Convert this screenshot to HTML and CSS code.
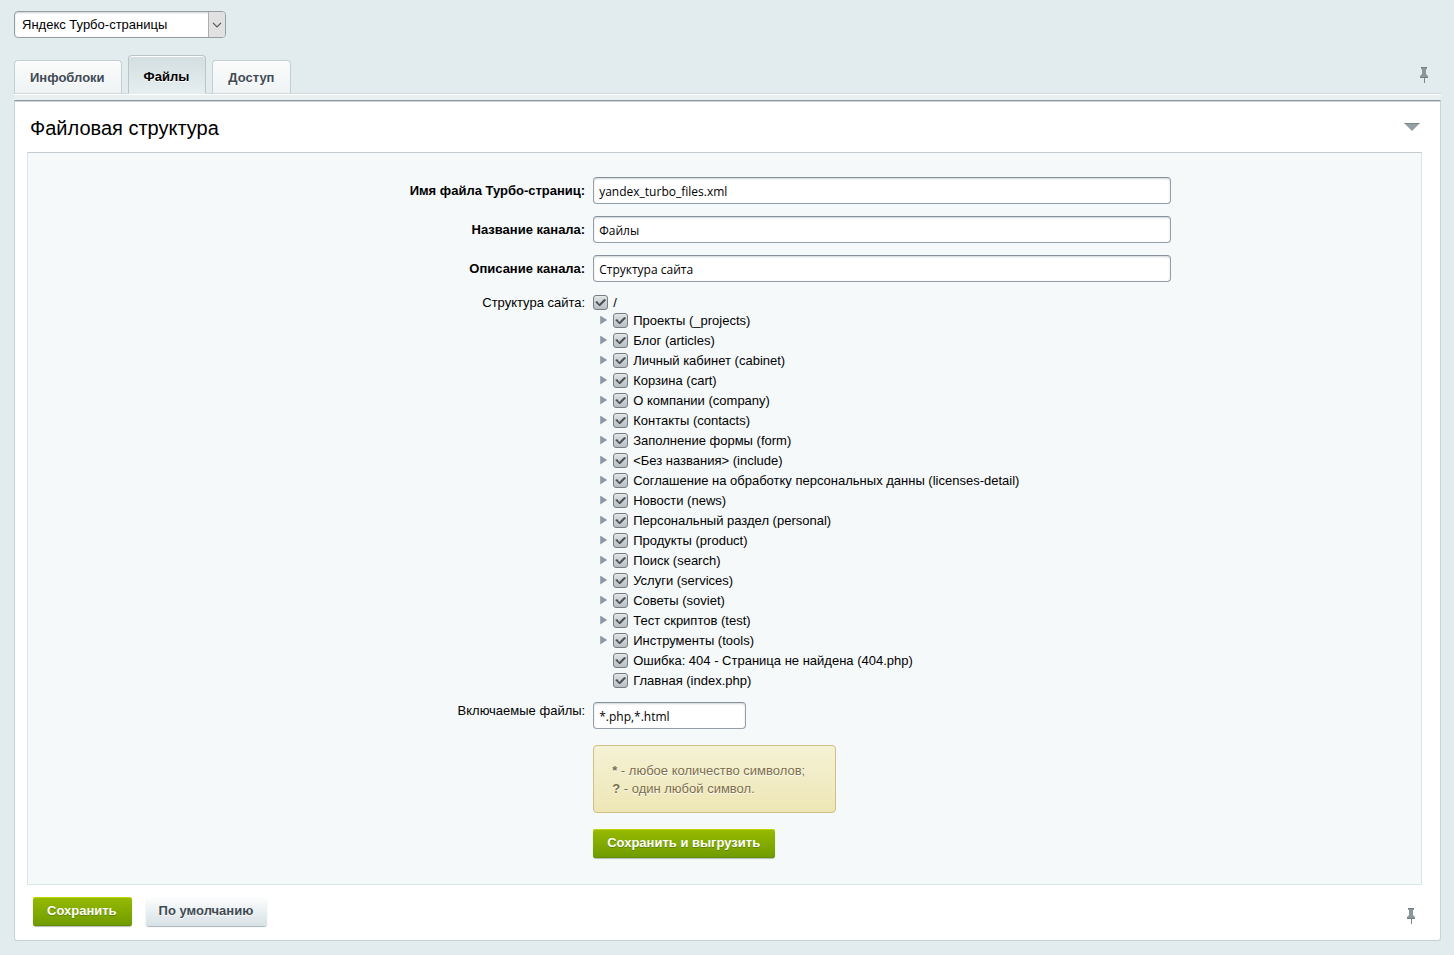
FILE: index.html
```html
<!DOCTYPE html>
<html lang="ru">
<head>
<meta charset="utf-8">
<title>Яндекс Турбо-страницы</title>
<link rel="stylesheet" href="styles.css">
</head>
<body>
<svg width="0" height="0" class="sprite" aria-hidden="true">
  <symbol id="pin" viewBox="0 0 10 16">
    <path d="M2 0h6v2H7v5l2 2v2H1V9l2-2V2H2z" fill="#8d979b"/>
    <path d="M2 0h6v1H2zM1 10h8v1H1z" fill="#737e83"/>
    <path d="M5 11h1v5H5z" fill="#7c878c"/>
  </symbol>
</svg>
<main class="page">
  <div class="select-wrap">
    <select class="select" aria-label="Модуль"><option>Яндекс Турбо-страницы</option></select>
    <span class="select-arrow"><svg width="10" height="6" viewBox="0 0 10 6"><path d="M1 .8l4 4 4-4" fill="none" stroke="#555" stroke-width="1.2"/></svg></span>
  </div>

  <div class="tabs-row">
    <div class="tabs" role="tablist">
      <button class="tab" role="tab">Инфоблоки</button>
      <button class="tab tab-active" role="tab" aria-selected="true">Файлы</button>
      <button class="tab" role="tab">Доступ</button>
    </div>
    <button class="icon-btn pin-top" aria-label="Закрепить вкладки"><svg width="10" height="16"><use href="#pin"/></svg></button>
  </div>

  <form class="card">
    <div class="card-head">
      <h1 class="title">Файловая структура</h1>
      <button type="button" class="icon-btn" aria-label="Свернуть"><svg width="16" height="8" viewBox="0 0 16 8"><path d="M0 0h16L8 8z" fill="#949fa4"/><path d="M0 0h16l-1 1H1z" fill="#7c878c"/></svg></button>
    </div>

    <div class="panel">
      <div class="row">
        <label class="label label-bold" for="file">Имя файла Турбо-страниц:</label>
        <input class="input input-wide" id="file" type="text" value="yandex_turbo_files.xml">
      </div>
      <div class="row">
        <label class="label label-bold" for="name">Название канала:</label>
        <input class="input input-wide" id="name" type="text" value="Файлы">
      </div>
      <div class="row">
        <label class="label label-bold" for="desc">Описание канала:</label>
        <input class="input input-wide" id="desc" type="text" value="Структура сайта">
      </div>
      <div class="row row-tree">
        <span class="label label-flat">Структура сайта:</span>
        <div class="tree">
          <label class="node root"><input class="check" type="checkbox" checked>/</label>
          <ul class="branch">
            <li class="item"><button type="button" class="twisty" aria-label="Раскрыть"></button><label class="node"><input class="check" type="checkbox" checked>Проекты (_projects)</label></li>
            <li class="item"><button type="button" class="twisty" aria-label="Раскрыть"></button><label class="node"><input class="check" type="checkbox" checked>Блог (articles)</label></li>
            <li class="item"><button type="button" class="twisty" aria-label="Раскрыть"></button><label class="node"><input class="check" type="checkbox" checked>Личный кабинет (cabinet)</label></li>
            <li class="item"><button type="button" class="twisty" aria-label="Раскрыть"></button><label class="node"><input class="check" type="checkbox" checked>Корзина (cart)</label></li>
            <li class="item"><button type="button" class="twisty" aria-label="Раскрыть"></button><label class="node"><input class="check" type="checkbox" checked>О компании (company)</label></li>
            <li class="item"><button type="button" class="twisty" aria-label="Раскрыть"></button><label class="node"><input class="check" type="checkbox" checked>Контакты (contacts)</label></li>
            <li class="item"><button type="button" class="twisty" aria-label="Раскрыть"></button><label class="node"><input class="check" type="checkbox" checked>Заполнение формы (form)</label></li>
            <li class="item"><button type="button" class="twisty" aria-label="Раскрыть"></button><label class="node"><input class="check" type="checkbox" checked>&lt;Без названия&gt; (include)</label></li>
            <li class="item"><button type="button" class="twisty" aria-label="Раскрыть"></button><label class="node"><input class="check" type="checkbox" checked>Соглашение на обработку персональных данны (licenses-detail)</label></li>
            <li class="item"><button type="button" class="twisty" aria-label="Раскрыть"></button><label class="node"><input class="check" type="checkbox" checked>Новости (news)</label></li>
            <li class="item"><button type="button" class="twisty" aria-label="Раскрыть"></button><label class="node"><input class="check" type="checkbox" checked>Персональный раздел (personal)</label></li>
            <li class="item"><button type="button" class="twisty" aria-label="Раскрыть"></button><label class="node"><input class="check" type="checkbox" checked>Продукты (product)</label></li>
            <li class="item"><button type="button" class="twisty" aria-label="Раскрыть"></button><label class="node"><input class="check" type="checkbox" checked>Поиск (search)</label></li>
            <li class="item"><button type="button" class="twisty" aria-label="Раскрыть"></button><label class="node"><input class="check" type="checkbox" checked>Услуги (services)</label></li>
            <li class="item"><button type="button" class="twisty" aria-label="Раскрыть"></button><label class="node"><input class="check" type="checkbox" checked>Советы (soviet)</label></li>
            <li class="item"><button type="button" class="twisty" aria-label="Раскрыть"></button><label class="node"><input class="check" type="checkbox" checked>Тест скриптов (test)</label></li>
            <li class="item"><button type="button" class="twisty" aria-label="Раскрыть"></button><label class="node"><input class="check" type="checkbox" checked>Инструменты (tools)</label></li>
            <li class="item item-leaf"><label class="node"><input class="check" type="checkbox" checked>Ошибка: 404 - Страница не найдена (404.php)</label></li>
            <li class="item item-leaf"><label class="node"><input class="check" type="checkbox" checked>Главная (index.php)</label></li>
          </ul>
        </div>
      </div>
      <div class="row row-mask">
        <label class="label label-flat" for="mask">Включаемые файлы:</label>
        <div class="stack">
          <input class="input input-mask" id="mask" type="text" value="*.php,*.html">
          <div class="note"><b>*</b> - любое количество символов;<br><b>?</b> - один любой символ.</div>
          <button type="button" class="btn btn-green">Сохранить и выгрузить</button>
        </div>
      </div>
    </div>

    <div class="card-foot">
      <button type="button" class="btn btn-green">Сохранить</button>
      <button type="button" class="btn btn-grey">По умолчанию</button>
      <button type="button" class="icon-btn pin-bottom" aria-label="Закрепить панель"><svg width="10" height="16"><use href="#pin"/></svg></button>
    </div>
  </form>
</main>
</body>
</html>
```
FILE: styles.css
```css
* { box-sizing: border-box; }
body {
  margin: 0;
  background: #e2ebed;
  color: #000;
  font: 13px/18px "Liberation Sans", Arial, sans-serif;
}
button, input, select { font: inherit; color: inherit; margin: 0; }
.sprite { position: absolute; }
.page { padding: 11px 13px 14px 14px; }

.select-wrap { position: relative; width: 212px; }
.select {
  display: block;
  appearance: none;
  width: 100%;
  height: 27px;
  padding: 0 24px 0 7px;
  border: 1px solid #959ea2;
  border-radius: 4px;
  background: #fff;
  box-shadow: inset 0 1px 2px #cdd3d6;
}
.select-arrow {
  position: absolute;
  top: 1px;
  right: 1px;
  bottom: 1px;
  width: 17px;
  display: flex;
  align-items: center;
  justify-content: center;
  background: #e1e1e1;
  border-left: 1px solid #adadad;
  border-radius: 0 3px 3px 0;
  pointer-events: none;
}

.tabs-row {
  display: flex;
  align-items: flex-end;
  justify-content: space-between;
  margin-top: 17px;
  height: 40px;
  border-bottom: 1px solid #fff;
  box-shadow: inset 0 -1px #cfd9dc, 0 5px #e9f0f2;
}
.tabs { display: flex; align-items: flex-end; gap: 6px; }
.tab {
  height: 34px;
  padding: 2px 16px 0 15px;
  border: 1px solid #c4cfd3;
  border-bottom-color: #cfd9dc;
  border-radius: 4px 4px 0 0;
  background: linear-gradient(#fafbfb, #eff3f4);
  box-shadow: inset 0 1px #fff;
  color: #3f4b54;
  font-weight: bold;
  text-shadow: 0 1px #fff;
}
.tab-active {
  height: 39px;
  padding-top: 5px;
  border-color: #b9c5ca;
  border-bottom-color: #e5edef;
  background: linear-gradient(#d3dee1, #e5edef);
  color: #000;
}
.icon-btn { display: flex; padding: 0; border: 0; background: none; }
.pin-top { margin: 0 12px 11px 0; }

.card {
  margin-top: 5px;
  padding: 0 18px 14px 12px;
  border: 1px solid #c8d2d5;
  border-top-color: #8f9a9f;
  border-radius: 0 0 3px 3px;
  background: #fff;
  box-shadow: inset 0 1px #cfd5d8;
}
.card-head {
  display: flex;
  align-items: center;
  justify-content: space-between;
  height: 51px;
  padding: 2px 2px 0 3px;
}
.title { margin: 0; font-size: 20px; line-height: 24px; font-weight: normal; }
.card-head .icon-btn { margin-bottom: 2px; }

.panel {
  padding: 24px 0 26px;
  border: 1px solid #dce5e9;
  border-top-color: #c3ccd1;
  background: #f5f9fa;
}
.row {
  display: grid;
  grid-template-columns: 40% 1fr;
  column-gap: 8px;
  margin-bottom: 12px;
}
.label { padding-top: 5px; text-align: right; }
.label-bold { font-weight: bold; }
.label-flat { padding-top: 0; }
.input {
  height: 27px;
  padding: 1px 5px 0;
  border: 1px solid #949eaa;
  border-top-color: #87919c;
  border-radius: 4px;
  background: #fff;
  box-shadow: inset 0 1px 2px #cfd5d9;
  font-family: "Open Sans", "Noto Sans", sans-serif;
  font-size: 12px;
}
.input-wide { width: calc(70% - 2px); }
.input-mask { width: 153px; }

.row-tree { margin-bottom: 11px; }
.tree { line-height: 20px; }
.branch { margin: 0; padding: 0; list-style: none; }
.node { display: flex; align-items: flex-start; gap: 5px; width: max-content; }
.node .check { margin-top: 2px; }
.root { height: 17px; align-items: center; }
.root .check { margin-top: 0; }
.item { display: flex; align-items: center; height: 20px; }
.item-leaf { padding-left: 20px; }
.twisty {
  width: 20px;
  height: 20px;
  padding: 0 0 2px 7px;
  border: 0;
  background: none;
}
.twisty::before {
  content: "";
  display: block;
  width: 7px;
  height: 9px;
  background: #8d9aa5;
  clip-path: polygon(0 0, 100% 50%, 0 100%);
}
.check {
  appearance: none;
  width: 15px;
  height: 15px;
  border: 1px solid #747d84;
  border-radius: 3px;
  background: linear-gradient(#e0e3e4, #b8bfc3);
  box-shadow: inset 0 1px #e6e9ea;
}
.check:checked::before {
  content: "";
  display: block;
  width: 13px;
  height: 13px;
  background: #4b5156;
  clip-path: polygon(1px 6px, 3px 5px, 5px 8px, 10px 3px, 12px 4px, 6px 10px, 5px 10px);
}

.row-mask { margin-bottom: 0; }
.stack { display: flex; flex-direction: column; align-items: flex-start; gap: 16px; }
.note {
  padding: 16px 30px 14px 18px;
  border: 1px solid #cebf85;
  border-radius: 4px;
  background: linear-gradient(#f5f2d6, #ede6b5);
  color: #7d6d48;
  text-shadow: 0 1px #fff;
}

.btn {
  height: 29px;
  padding: 0 15px 2px 14px;
  border: 0;
  border-radius: 3px;
  font-weight: bold;
}
.btn-green {
  background: linear-gradient(#97ba00, #6f9b00);
  box-shadow: inset 0 1px #bfd600, inset 0 -1px #658c00, 0 1px 1px #b5bcb0;
  color: #fff;
  text-shadow: 0 1px #5f8300;
}
.btn-grey {
  padding: 0 14px 2px 13px;
  background: linear-gradient(#fdfefe, #d7e1e5);
  box-shadow: 0 1px 1px #a9b3b8;
  color: #3f4b54;
  text-shadow: 0 1px #fff;
}
.card-foot { display: flex; align-items: center; gap: 14px; padding: 12px 6px 0; }
.pin-bottom { margin: 8px 0 0 auto; }
```
